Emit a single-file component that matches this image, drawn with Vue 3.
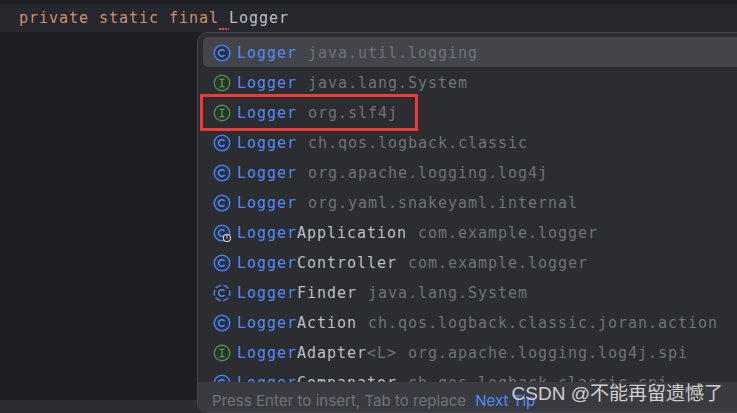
<script setup>
const rows = [
  { icon: 'c', match: 'Logger', name: '', gen: '', pkg: 'java.util.logging', sel: true },
  { icon: 'i', match: 'Logger', name: '', gen: '', pkg: 'java.lang.System' },
  { icon: 'i', match: 'Logger', name: '', gen: '', pkg: 'org.slf4j' },
  { icon: 'c', match: 'Logger', name: '', gen: '', pkg: 'ch.qos.logback.classic' },
  { icon: 'c', match: 'Logger', name: '', gen: '', pkg: 'org.apache.logging.log4j' },
  { icon: 'c', match: 'Logger', name: '', gen: '', pkg: 'org.yaml.snakeyaml.internal' },
  { icon: 'c', run: true, match: 'Logger', name: 'Application', gen: '', pkg: 'com.example.logger' },
  { icon: 'c', match: 'Logger', name: 'Controller', gen: '', pkg: 'com.example.logger' },
  { icon: 'c', dash: true, match: 'Logger', name: 'Finder', gen: '', pkg: 'java.lang.System' },
  { icon: 'c', match: 'Logger', name: 'Action', gen: '', pkg: 'ch.qos.logback.classic.joran.action' },
  { icon: 'i', match: 'Logger', name: 'Adapter', gen: '<L>', pkg: 'org.apache.logging.log4j.spi' },
  { icon: 'c', match: 'Logger', name: 'Companator', gen: '', pkg: 'ch.qos.logback.classic.spi' },
]
</script>

<template>
  <div class="screen">
    <div class="topbar"></div>
    <div class="codeline">
      <span class="kw">private static final</span><span class="squiggle"> </span><span class="cls">Logger</span>
    </div>
    <div class="editor"></div>
    <div class="gutter-bottom"></div>

    <div class="popup">
      <div class="list">
        <div v-for="(r, i) in rows" :key="i" class="row" :class="{ sel: r.sel }">
          <svg class="icon" width="18" height="18" viewBox="0 0 18 18">
            <template v-if="r.icon === 'c'">
              <circle cx="9" cy="9" r="7.8" :fill="r.dash ? 'none' : '#25324d'" stroke="#4a7fe8" stroke-width="1.5" :stroke-dasharray="r.dash ? '6 2.17' : null" stroke-dashoffset="3" />
              <path d="M11.5 7A3.3 3.3 0 1 0 11.5 11" fill="none" stroke="#5a8ff5" stroke-width="1.4" />
            </template>
            <template v-else>
              <circle cx="9" cy="9" r="7.8" fill="#253627" stroke="#4f8a55" stroke-width="1.4" />
              <path d="M6.5 5.4H11.5M9 5.4V12.6M6.5 12.6H11.5" fill="none" stroke="#57965c" stroke-width="1.3" />
            </template>
            <template v-if="r.run">
              <circle cx="14" cy="14" r="3.6" fill="#2b2d30" stroke="#ced0d6" stroke-width="1.1" />
              <path d="M14 11V14.6" stroke="#ced0d6" stroke-width="1.1" />
            </template>
          </svg>
          <span class="match">{{ r.match }}</span><span class="name">{{ r.name }}</span><span class="gen">{{ r.gen }}</span>
          <span class="pkg">{{ r.pkg }}</span>
        </div>
      </div>
      <div class="footer">
        <span class="hint">Press Enter to insert, Tab to replace</span>
        <span class="tip">Next Tip</span>
      </div>
    </div>

    <div class="redbox"></div>
    <div class="watermark">CSDN @不能再留遗憾了</div>
  </div>
</template>

<style scoped>
.screen {
  position: relative;
  width: 737px;
  height: 413px;
  overflow: hidden;
  background: #1e1f22;
  display: flex;
  flex-direction: column;
  font-family: "DejaVu Sans Mono", monospace;
  font-size: 15px;
  letter-spacing: 0.97px;
}
.topbar {
  height: 4px;
  flex: none;
  background: #1e1f22;
}
.codeline {
  height: 28px;
  flex: none;
  box-sizing: border-box;
  padding: 2px 0 0 19px;
  line-height: 24px;
  background: #26282e;
  white-space: pre;
}
.kw { color: #cf8e6d; }
.cls { color: #bcbec4; }
.squiggle {
  display: inline-block;
  vertical-align: top;
  width: 10px;
  height: 24px;
  background: repeating-linear-gradient(90deg, #d9505c 0 2px, transparent 2px 3px) 0 22px / 100% 2px no-repeat;
}
.editor { flex: 1; }
.gutter-bottom {
  height: 13px;
  flex: none;
  background: #2b2d30;
}
.popup {
  position: absolute;
  left: 197px;
  top: 32px;
  width: 560px;
  height: 381px;
  box-sizing: border-box;
  border: 1px solid #43454a;
  border-radius: 10px;
  background: #2b2d30;
  overflow: hidden;
  display: flex;
  flex-direction: column;
}
.list {
  flex: 1;
  min-height: 0;
  overflow: hidden;
  padding-top: 4px;
}
.row {
  height: 30px;
  box-sizing: border-box;
  display: flex;
  align-items: center;
  padding: 2px 0 0 10px;
  margin-left: 5px;
  border-radius: 5px;
  white-space: pre;
}
.row.sel { background: #43454a; }
.icon {
  flex: none;
  margin: -1px 6px 0 0;
}
.match { color: #548af7; }
.name { color: #bcbec4; }
.gen { color: #6f737a; }
.pkg {
  color: #6f737a;
  margin-left: 11px;
}
.footer {
  height: 30px;
  flex: none;
  box-sizing: border-box;
  background: #393b40;
  padding: 6px 0 0 14px;
  display: flex;
  align-items: center;
  font-family: Inter, sans-serif;
  font-size: 15.1px;
  letter-spacing: 0;
}
.hint { color: #6f737a; }
.tip {
  color: #548af7;
  margin-left: 9px;
}
.redbox {
  position: absolute;
  left: 200px;
  top: 94px;
  width: 218px;
  height: 37px;
  box-sizing: border-box;
  border: 3px solid #f03a3a;
  pointer-events: none;
}
.watermark {
  position: absolute;
  right: 14px;
  top: 381px;
  font-family: "Liberation Sans", "Noto Sans CJK SC", sans-serif;
  font-size: 19px;
  letter-spacing: 0;
  line-height: 26px;
  color: #cfcfcf;
  white-space: nowrap;
}
</style>
